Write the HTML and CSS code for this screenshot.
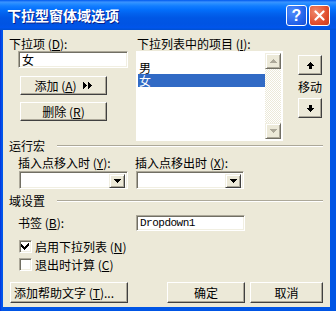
FILE: index.html
```html
<!DOCTYPE html>
<html lang="zh-CN">
<head>
  <meta charset="UTF-8">
  <title>下拉型窗体域选项</title>
  <link rel="stylesheet" href="styles.css">
</head>
<body>
  <div class="window">
    <div class="titlebar">
      <div class="title">下拉型窗体域选项</div>
      <div class="caption-btn help">?</div>
      <div class="caption-btn close">
        <svg width="11" height="11" viewBox="0 0 11 11"><path d="M1.5 1.5L9.5 9.5M9.5 1.5L1.5 9.5" stroke="#fff" stroke-width="2.2" stroke-linecap="round"/></svg>
      </div>
    </div>

    <div class="client">
      <div class="top">
        <div class="col-left">
          <div class="label">下拉项 (<u>D</u>):</div>
          <div class="field item-field">女</div>
          <div class="btn add-btn">添加 (<u>A</u>)
            <svg class="dbl" width="10" height="7" viewBox="0 0 10 7" shape-rendering="crispEdges"><path d="M0 0h1v1h1v1h1v1h1v1h-1v1h-1v1h-1v1H0z M5 0h1v1h1v1h1v1h1v1h-1v1h-1v1h-1v1H5z" fill="#000"/></svg>
          </div>
          <div class="btn del-btn">删除 (<u>R</u>)</div>
        </div>

        <div class="col-mid">
          <div class="label">下拉列表中的项目 (<u>I</u>):</div>
          <div class="listbox">
            <div class="list-items">
              <div class="list-item">男</div>
              <div class="list-item selected">女</div>
            </div>
            <div class="scrollbar">
              <div class="sb-btn">
                <svg width="7" height="4" viewBox="0 0 7 4" shape-rendering="crispEdges"><path d="M3 0h1v1h1v1h1v1h1v1H0V3h1V2h1V1h1z" fill="#aca899"/></svg>
              </div>
              <div class="sb-track"></div>
              <div class="sb-btn">
                <svg width="7" height="4" viewBox="0 0 7 4" shape-rendering="crispEdges"><path d="M0 0h7v1h-1v1h-1v1h-1v1h-1V3h-1V2h-1V1H0z" fill="#aca899"/></svg>
              </div>
            </div>
          </div>
        </div>

        <div class="col-right">
          <div class="btn move-btn">
            <svg width="7" height="7" viewBox="0 0 7 7" shape-rendering="crispEdges"><path d="M3 0h1v1h1v1h1v1h1v1H0V3h1V2h1V1h1z M2 4h3v3H2z" fill="#000"/></svg>
          </div>
          <div class="move-label">移动</div>
          <div class="btn move-btn">
            <svg width="7" height="7" viewBox="0 0 7 7" shape-rendering="crispEdges"><path d="M2 0h3v3H2z M0 3h7v1h-1v1h-1v1h-1v1h-1V6h-1V5h-1V4H0z" fill="#000"/></svg>
          </div>
        </div>
      </div>

      <div class="group-head"><span>运行宏</span><i class="etch"></i></div>
      <div class="macro-row">
        <div class="macro-col first">
          <div class="label">插入点移入时 (<u>Y</u>):</div>
          <div class="field combo">
            <div class="combo-arrow">
              <svg width="7" height="4" viewBox="0 0 7 4" shape-rendering="crispEdges"><path d="M0 0h7v1h-1v1h-1v1h-1v1h-1V3h-1V2h-1V1H0z" fill="#000"/></svg>
            </div>
          </div>
        </div>
        <div class="macro-col second">
          <div class="label">插入点移出时 (<u>X</u>):</div>
          <div class="field combo">
            <div class="combo-arrow">
              <svg width="7" height="4" viewBox="0 0 7 4" shape-rendering="crispEdges"><path d="M0 0h7v1h-1v1h-1v1h-1v1h-1V3h-1V2h-1V1H0z" fill="#000"/></svg>
            </div>
          </div>
        </div>
      </div>

      <div class="group-head second-group"><span>域设置</span><i class="etch"></i></div>
      <div class="bookmark-row">
        <div class="bookmark-label">书签 (<u>B</u>):</div>
        <div class="field bookmark-field">Dropdown1</div>
      </div>
      <div class="check-row first-check">
        <div class="checkbox">
          <svg width="9" height="9" viewBox="0 0 9 9" shape-rendering="crispEdges"><path d="M7 1h1v3h-1v1h-1v1h-1v1h-1v1h-1v-1h-1v-1h-1v-1H0V2h1v1h1v1h1v1h1V4h1V3h1V2h1z" fill="#000"/></svg>
        </div>
        <span>启用下拉列表 (<u>N</u>)</span>
      </div>
      <div class="check-row second-check">
        <div class="checkbox"></div>
        <span>退出时计算 (<u>C</u>)</span>
      </div>

      <div class="bottom-row">
        <div class="btn help-text-btn">添加帮助文字 (<u>T</u>)...</div>
        <div class="btn ok-btn">确定</div>
        <div class="btn cancel-btn">取消</div>
      </div>
    </div>
  </div>
</body>
</html>
```

FILE: styles.css
```css
body {
  margin: 0;
  width: 336px;
  height: 311px;
  overflow: hidden;
  font-family: "Noto Sans CJK SC", sans-serif;
  font-size: 12px;
  color: #000;
  background: #0055e5;
}

u {
  text-decoration: underline;
  text-underline-offset: 1px;
}

.window {
  width: 336px;
  height: 311px;
  display: flex;
  flex-direction: column;
  background: linear-gradient(to right, #0831d9, #0058ee 2px, #0055e5 3px);
}

.titlebar {
  height: 30px;
  flex: none;
  display: flex;
  align-items: center;
  padding: 0 6px 0 7px;
  background: linear-gradient(to bottom, #0058ee 0%, #3a93ff 7%, #288eff 12%, #127dff 20%, #036ffc 32%, #0262ee 45%, #0057e5 60%, #0054e3 80%, #0055eb 92%, #0050d2 100%);
}

.title {
  flex: 1;
  color: #fff;
  font-size: 14px;
  font-weight: bold;
  line-height: 16px;
  text-shadow: 1px 1px #0a1f8a;
}

.caption-btn {
  width: 21px;
  height: 21px;
  box-sizing: border-box;
  border: 1px solid #fff;
  border-radius: 3px;
  display: flex;
  align-items: center;
  justify-content: center;
  color: #fff;
}

.help {
  margin-right: 2px;
  background: radial-gradient(circle at 30% 30%, #4f8dfc, #1f5ee8 70%, #1a4fd0);
  font-family: "Liberation Sans", sans-serif;
  font-size: 16px;
  font-weight: bold;
  line-height: 19px;
}

.close {
  background: radial-gradient(circle at 30% 30%, #f0896c, #df4b2b 65%, #c63d1e);
}

.client {
  flex: 1;
  margin: 0 6px 4px 3px;
  padding: 7px 0 0 6px;
  background: #ece9d8;
}

.label {
  height: 14px;
  line-height: 14px;
  white-space: nowrap;
}

/* sunken 3D edge */
.field {
  box-sizing: border-box;
  background: #fff;
  border: 1px solid;
  border-color: #aca899 #fff #fff #aca899;
  box-shadow: inset 1px 1px #716f64, inset -1px -1px #f1efe2;
}

/* raised 3D edge */
.btn {
  box-sizing: border-box;
  background: #ece9d8;
  border: 1px solid;
  border-color: #fff #404040 #404040 #fff;
  box-shadow: inset -1px -1px #aca899;
  display: flex;
  align-items: center;
  justify-content: center;
  white-space: nowrap;
  line-height: 14px;
}

.top {
  display: flex;
  height: 100px;
}

.col-left {
  width: 127px;
}

.item-field {
  margin-left: 9px;
  width: 110px;
  height: 17px;
  padding-left: 3px;
  line-height: 15px;
}

.add-btn {
  margin: 8px 0 0 11px;
  width: 87px;
  height: 19px;
}

.add-btn .dbl {
  margin-left: 6px;
}

.del-btn {
  margin: 7px 0 0 11px;
  width: 87px;
  height: 19px;
}

.col-mid {
  width: 147px;
}

.col-mid .label {
  padding-left: 1px;
}

.listbox {
  height: 86px;
  display: flex;
  padding: 2px;
  background: #fff;
}

.list-items {
  flex: 1;
  padding-top: 8px;
}

.list-item {
  height: 13px;
  line-height: 13px;
  padding-left: 1px;
}

.list-item.selected {
  background: #316ac5;
  color: #fff;
}

.scrollbar {
  width: 16px;
  display: flex;
  flex-direction: column;
}

.sb-btn {
  height: 16px;
  box-sizing: border-box;
  background: #ece9d8;
  border: 1px solid;
  border-color: #f1efe2 #716f64 #716f64 #f1efe2;
  box-shadow: inset 1px 1px #fff, inset -1px -1px #aca899;
  display: flex;
  align-items: center;
  justify-content: center;
}

.sb-track {
  flex: 1;
  background: repeating-conic-gradient(#fff 0 25%, #ece9d8 0 50%) 0 0 / 2px 2px;
}

.col-right {
  margin-left: 15px;
  padding-top: 18px;
  width: 24px;
  display: flex;
  flex-direction: column;
  align-items: center;
}

.move-btn {
  width: 24px;
  height: 20px;
}

.move-label {
  height: 23px;
  line-height: 23px;
  white-space: nowrap;
}

.group-head {
  margin-top: 3px;
  height: 12px;
  display: flex;
  align-items: center;
  line-height: 12px;
}

.group-head.second-group {
  margin-top: 6px;
}

.etch {
  flex: 1;
  margin: 0 7px 0 12px;
  border-top: 1px solid #aca899;
  border-bottom: 1px solid #fff;
}

.macro-row {
  display: flex;
  margin-top: 4px;
}

.macro-col.first {
  margin-left: 9px;
  width: 117px;
}

.macro-col .combo {
  margin: 1px 0 0 1px;
  height: 18px;
  padding: 2px;
  display: flex;
  justify-content: flex-end;
}

.macro-col.first .combo {
  width: 109px;
}

.macro-col.second .combo {
  width: 108px;
}

.combo-arrow {
  width: 16px;
  height: 14px;
  box-sizing: border-box;
  background: #ece9d8;
  border: 1px solid;
  border-color: #f1efe2 #404040 #404040 #f1efe2;
  box-shadow: inset 1px 1px #fff, inset -1px -1px #aca899;
  display: flex;
  align-items: center;
  justify-content: center;
}

.bookmark-row {
  display: flex;
  align-items: center;
  margin-top: 8px;
  height: 16px;
}

.bookmark-label {
  margin-left: 9px;
  width: 118px;
  line-height: 14px;
}

.bookmark-field {
  width: 109px;
  height: 16px;
  padding-left: 3px;
  font-family: "Liberation Mono", monospace;
  font-size: 11px;
  letter-spacing: -0.5px;
  line-height: 14px;
}

.check-row {
  display: flex;
  align-items: center;
  height: 13px;
  margin-left: 10px;
  line-height: 13px;
}

.check-row.first-check {
  margin-top: 9px;
}

.check-row.second-check {
  margin-top: 5px;
}

.checkbox {
  width: 13px;
  height: 13px;
  box-sizing: border-box;
  background: #fff;
  border: 1px solid;
  border-color: #aca899 #fff #fff #aca899;
  box-shadow: inset 1px 1px #716f64, inset -1px -1px #f1efe2;
  display: flex;
  align-items: center;
  justify-content: center;
  margin-right: 3px;
}

.bottom-row {
  display: flex;
  margin-top: 11px;
}

.help-text-btn {
  margin-left: 1px;
  width: 118px;
  height: 21px;
  justify-content: flex-start;
  padding-left: 3px;
}

.ok-btn {
  margin-left: 39px;
  width: 78px;
  height: 21px;
}

.cancel-btn {
  margin-left: 5px;
  width: 73px;
  height: 21px;
}
```
